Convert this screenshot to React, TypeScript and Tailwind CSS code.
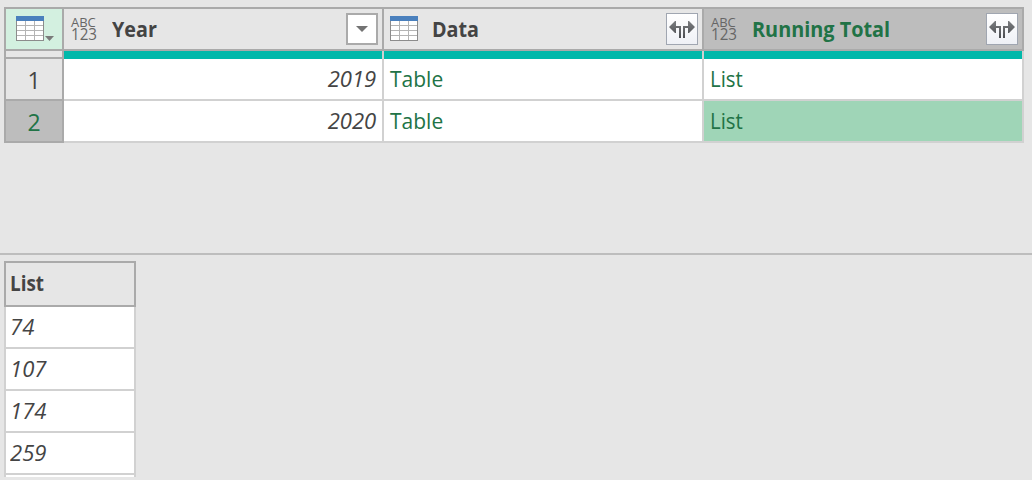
import type { ReactNode } from "react";

const typeStack = "font-['Open_Sans','Noto_Sans',sans-serif]";

function TableIcon() {
  return (
    <svg width="28" height="25" viewBox="0 0 28 25" shapeRendering="crispEdges" className="mb-px block shrink-0">
      <rect width="28" height="25" fill="#8c8c8c" />
      <rect width="28" height="5" fill="#4a80bd" />
      <rect x="1" y="5" width="26" height="19" fill="#fff" />
      <path d="M1 9.5H27M1 14.5H27M1 19.5H27M9.5 5V24M18.5 5V24" stroke="#b4b4b4" fill="none" />
    </svg>
  );
}

function AnyTypeIcon() {
  return (
    <div className="flex h-7 w-7 shrink-0 flex-col pt-px pl-px font-medium text-[#666666]">
      <span className="block h-3 w-fit origin-left text-[13px] leading-3">ABC</span>
      <span className="block h-3 w-fit origin-left scale-x-[0.98] text-[15.5px] leading-3">123</span>
    </div>
  );
}

function FilterButton() {
  return (
    <button className="flex h-8 w-8 items-center justify-center border-2 border-[#aaaaaa] bg-white">
      <svg width="12" height="6" viewBox="0 0 12 6" className="block">
        <path d="M0 0H12L6 6Z" fill="#737373" />
      </svg>
    </button>
  );
}

function ExpandButton() {
  return (
    <button className="flex h-8 w-8 items-center justify-center border border-[#a0a6b1] bg-linear-to-b from-white to-[#eff1f6]">
      <svg width="26" height="18" viewBox="0 0 26 18" className="block">
        <defs>
          <linearGradient id="arrows" x1="0" y1="0" x2="0" y2="1">
            <stop offset="0" stopColor="#7b7d80" />
            <stop offset="1" stopColor="#4b4d50" />
          </linearGradient>
        </defs>
        <path d="M0 7L6 1H7V6H12V18H10V8H7V13H6Z" fill="url(#arrows)" />
        <path d="M26 7L20 1H19V6H14V18H16V8H19V13H20Z" fill="url(#arrows)" />
      </svg>
    </button>
  );
}

function ColumnHeader({ icon, title, button, selected }: { icon: ReactNode; title: ReactNode; button: ReactNode; selected?: boolean }) {
  return (
    <div className={`flex h-11 w-80 items-center border-y-2 border-r-2 border-[#aaaaaa] pr-1 pl-1.5 ${selected ? "bg-[#bdbdbd] text-[#217346]" : "bg-[#e6e6e6] text-[#444444]"}`}>
      {icon}
      <div className="ml-3.5 flex-1 text-[21px] leading-8 font-bold whitespace-nowrap">{title}</div>
      {button}
    </div>
  );
}

function Cell({ children, className = "" }: { children: ReactNode; className?: string }) {
  return (
    <div className={`flex h-[42px] w-80 items-center border-r-2 border-b-2 border-[#d1d1d1] px-1.5 text-[21px] leading-8 ${className}`}>
      {children}
    </div>
  );
}

function DataRow({ index, year, selected }: { index: number; year: string; selected?: boolean }) {
  return (
    <div className="flex">
      <div className={`flex h-[42px] w-15 items-center justify-center border-x-2 border-b-2 border-[#aaaaaa] pt-0.5 text-[23px] leading-8 ${selected ? "bg-[#bdbdbd] text-[#217346]" : "bg-[#e6e6e6] text-[#444444]"}`}>
        <span className="block">{index}</span>
      </div>
      <Cell className="justify-end bg-white text-[#444444] italic">
        <span className="block origin-right scale-x-[1.05]">{year}</span>
      </Cell>
      <Cell className="bg-white text-[#217346]">
        <span className="block">Table</span>
      </Cell>
      <Cell className={selected ? "bg-[#9fd5b7] text-[#217346]" : "bg-white text-[#217346]"}>
        <span className="block origin-left scale-x-[0.97]">List</span>
      </Cell>
    </div>
  );
}

export default function App() {
  return (
    <main className={`h-[480px] w-[1032px] overflow-hidden bg-[#e6e6e6] ${typeStack}`}>
      <section className="h-[255px] border-b-2 border-[#bdbdbd] pt-[7px] pl-1">
        <div className="flex">
          <div className="flex h-11 w-15 items-center border-2 border-[#aaaaaa] bg-[#d3f0e0] pl-2.5">
            <TableIcon />
            <svg width="9" height="5" viewBox="0 0 9 5" className="mt-[19px] ml-px block">
              <path d="M0 0H9L4.5 5Z" fill="#7a7a7a" />
            </svg>
          </div>
          <ColumnHeader icon={<AnyTypeIcon />} title={<span className="inline-block origin-left scale-x-[0.94]">Year</span>} button={<FilterButton />} />
          <ColumnHeader icon={<TableIcon />} title={<span className="inline-block origin-left scale-x-[0.94]">Data</span>} button={<ExpandButton />} />
          <ColumnHeader selected icon={<AnyTypeIcon />} title={<span className="inline-block origin-left scale-x-[0.945]">Running Total</span>} button={<ExpandButton />} />
        </div>
        <div className="flex h-2">
          <div className="w-15 border-x-2 border-b-2 border-[#aaaaaa]" />
          <div className="w-80 border-r-2 border-[#d1d1d1] bg-[#01b8aa]" />
          <div className="w-80 border-r-2 border-[#d1d1d1] bg-[#01b8aa]" />
          <div className="w-80 border-r-2 border-[#d1d1d1] bg-[#01b8aa]" />
        </div>
        <DataRow index={1} year="2019" />
        <DataRow index={2} year="2020" selected />
      </section>
      <section className="h-[222px] overflow-hidden pt-1.5 pl-1">
        <div className="flex h-[46px] w-[132px] items-center border-2 border-[#aaaaaa] pb-0.5 pl-1 text-[21px] leading-8 font-bold text-[#444444]">
          <span className="block origin-left scale-x-[0.9]">List</span>
        </div>
        {["74", "107", "174", "259"].map((value) => (
          <div key={value} className="flex h-[42px] w-[132px] items-center border-x-2 border-b-2 border-[#d1d1d1] bg-white pl-1 text-[21px] leading-8 text-[#444444] italic">
            <span className="block origin-left scale-x-[1.05]">{value}</span>
          </div>
        ))}
        <div className="h-[42px] w-[132px] border-x-2 border-[#d1d1d1] bg-white" />
      </section>
    </main>
  );
}
